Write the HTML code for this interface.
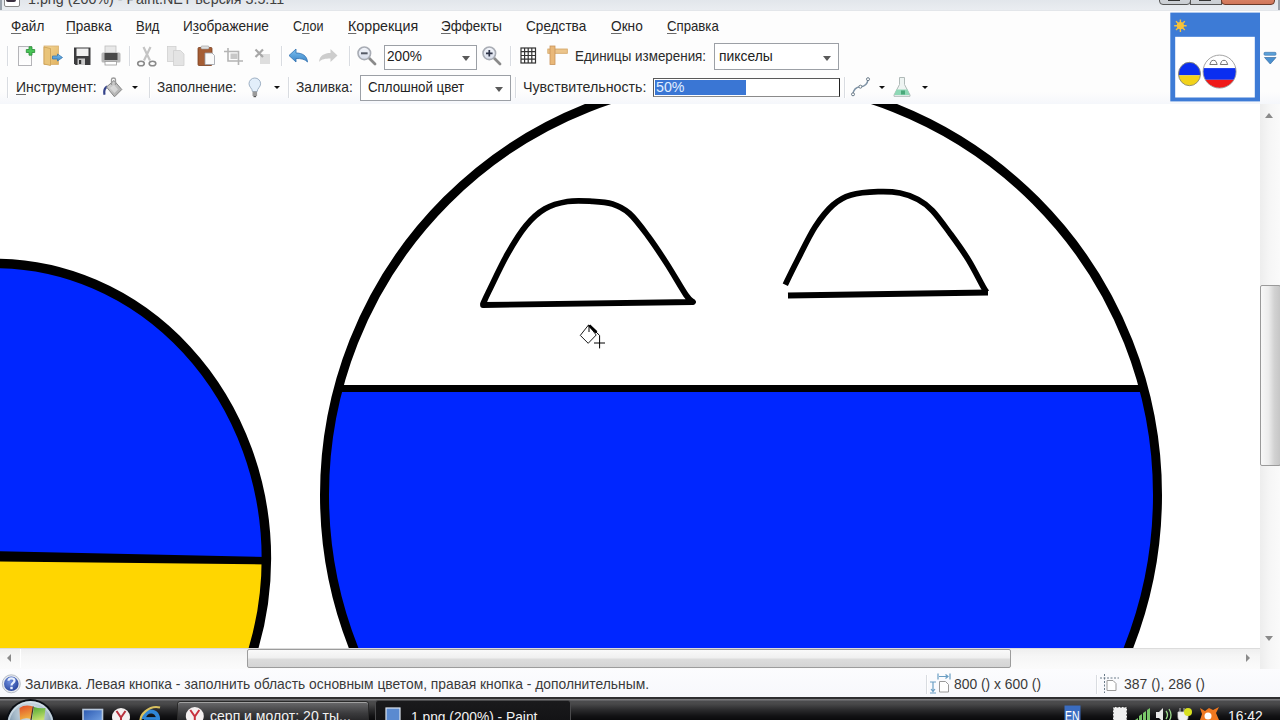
<!DOCTYPE html>
<html><head><meta charset="utf-8">
<style>
*{margin:0;padding:0;box-sizing:border-box}
html,body{width:1280px;height:720px;overflow:hidden;background:#fff;font-family:"Liberation Sans",sans-serif;position:relative}
.a{position:absolute}
.t{position:absolute;white-space:nowrap;line-height:20px}
.u{text-decoration:underline;text-decoration-thickness:1px;text-underline-offset:2px;text-decoration-color:#6a6a6a}
.sep{position:absolute;width:2px;border-left:1px solid #d9dce1;border-right:1px solid #fff}
.combo{position:absolute;background:#fff;border:1px solid #9ca0a6}
.arr{position:absolute;width:0;height:0;border-left:4.5px solid transparent;border-right:4.5px solid transparent;border-top:5px solid #555}
svg{position:absolute;overflow:visible}
</style></head><body>
<div class="a" style="left:0;top:0;width:1280px;height:9.5px;background:linear-gradient(#e2e6eb,#eaedf1)"></div><div class="a" style="left:0;top:0;width:2px;height:11px;background:#9aa3ad"></div><div class="a" style="left:3.5px;top:-4px;width:16px;height:11px;border:1.5px solid #8a8a8a;border-radius:2px;background:#fff"></div><div class="a" style="left:5.5px;top:-2px;width:10px;height:4px;background:#3a3040;border-radius:2px"></div><div class="t" style="left:28.31px;top:-11px;font-size:14.5px;color:#404040;transform:scaleX(0.9856);transform-origin:0 0;">1.png (200%) - Paint.NET версия 3.5.11</div>
<div class="a" style="left:1159px;top:-12px;width:32px;height:17px;border:1px solid #555;border-radius:4px;background:linear-gradient(#dfe2e6,#c9cdd2)"></div><div class="a" style="left:1190px;top:-12px;width:32px;height:17px;border:1px solid #555;background:linear-gradient(#dfe2e6,#c9cdd2)"></div><div class="a" style="left:1221px;top:-12px;width:54px;height:17px;border:1px solid #6a3a2a;border-radius:4px;background:linear-gradient(#e89a7c,#d0765a)"></div><div class="a" style="left:1168px;top:0;width:12px;height:1px;background:#333"></div><div class="a" style="left:1199px;top:0;width:12px;height:1px;background:#333"></div><div class="a" style="left:1278px;top:0;width:2px;height:12px;background:#9aa0a8"></div><div class="a" style="left:0;top:10px;width:1280px;height:94px;background:linear-gradient(#fdfdfd 0,#fdfdfd 82px,#f5f7fb 94px)"></div><div class="a" style="left:0;top:10px;width:1280px;height:1px;background:#e3e6ea"></div><div class="t" style="left:10.50px;top:16px;font-size:14.5px;color:#262626;transform:scaleX(0.9350);transform-origin:0 0;"><span class=u>Ф</span>айл</div>
<div class="t" style="left:65.87px;top:16px;font-size:14.5px;color:#262626;transform:scaleX(0.9343);transform-origin:0 0;"><span class=u>П</span>равка</div>
<div class="t" style="left:136.11px;top:16px;font-size:14.5px;color:#262626;transform:scaleX(0.8925);transform-origin:0 0;"><span class=u>В</span>ид</div>
<div class="t" style="left:183.06px;top:16px;font-size:14.5px;color:#262626;transform:scaleX(0.9393);transform-origin:0 0;">И<span class=u>з</span>ображение</div>
<div class="t" style="left:293.30px;top:16px;font-size:14.5px;color:#262626;transform:scaleX(0.8675);transform-origin:0 0;">С<span class=u>л</span>ои</div>
<div class="t" style="left:347.52px;top:16px;font-size:14.5px;color:#262626;transform:scaleX(0.9834);transform-origin:0 0;"><span class=u>К</span>оррекция</div>
<div class="t" style="left:441.20px;top:16px;font-size:14.5px;color:#262626;transform:scaleX(0.9253);transform-origin:0 0;"><span class=u>Э</span>ффекты</div>
<div class="t" style="left:525.70px;top:16px;font-size:14.5px;color:#262626;transform:scaleX(0.9375);transform-origin:0 0;">Ср<span class=u>е</span>дства</div>
<div class="t" style="left:611.00px;top:16px;font-size:14.5px;color:#262626;transform:scaleX(0.9426);transform-origin:0 0;"><span class=u>О</span>кно</div>
<div class="t" style="left:667.40px;top:16px;font-size:14.5px;color:#262626;transform:scaleX(0.9098);transform-origin:0 0;"><span class=u>С</span>правка</div>
<div class="sep" style="left:7px;top:46px;height:20px"></div><div class="sep" style="left:129px;top:46px;height:20px"></div><div class="sep" style="left:281px;top:46px;height:20px"></div><div class="sep" style="left:349px;top:46px;height:20px"></div><div class="sep" style="left:510px;top:46px;height:20px"></div><div class="sep" style="left:7px;top:77px;height:21px"></div><div class="sep" style="left:149px;top:77px;height:21px"></div><div class="sep" style="left:288px;top:77px;height:21px"></div><div class="sep" style="left:515px;top:77px;height:21px"></div><div class="sep" style="left:844px;top:77px;height:21px"></div><svg style="left:0;top:0" width="1280" height="110" viewBox="0 0 1280 110">
<defs>
<linearGradient id="gPage" x1="0" y1="0" x2="0" y2="1"><stop offset="0" stop-color="#f4f4f6"/><stop offset="1" stop-color="#ffffff"/></linearGradient>
<linearGradient id="gFold" x1="0" y1="0" x2="1" y2="1"><stop offset="0" stop-color="#f3d89a"/><stop offset="1" stop-color="#e2b25e"/></linearGradient>
<linearGradient id="gBlue" x1="0" y1="0" x2="0" y2="1"><stop offset="0" stop-color="#7cc0f0"/><stop offset="1" stop-color="#3c86c8"/></linearGradient>
<linearGradient id="gLens" x1="0" y1="0" x2="0" y2="1"><stop offset="0" stop-color="#f4f6fb"/><stop offset="1" stop-color="#d6dcea"/></linearGradient>
</defs>
<!-- new -->
<rect x="18.5" y="46.5" width="13" height="19" fill="url(#gPage)" stroke="#b4b4b8"/>
<path d="M29,46.8 h3 v2.7 h2.7 v3 h-2.7 v2.7 h-3 v-2.7 h-2.7 v-3 h2.7 z" fill="#48c456" stroke="#2a8a36" stroke-width="0.8"/>
<!-- open -->
<rect x="44" y="46" width="14.5" height="18.5" fill="url(#gFold)" stroke="#d8b070" stroke-width="0.8"/>
<path d="M44,47 L50.5,48.5 L50.5,65.5 L44,64 Z" fill="#e9c47a" stroke="#caa055" stroke-width="0.8"/>
<path d="M52.5,56 h5 v-2 l5,3.5 l-5,3.5 v-2 h-5 z" fill="url(#gBlue)" stroke="#3a78b0" stroke-width="0.8"/>
<!-- save -->
<path d="M74,47.5 h16.5 v17.5 h-15 l-1.5,-1.5 z" fill="#3c3c3e"/>
<rect x="76.5" y="48.5" width="12" height="7.5" fill="#f0f0f0"/>
<rect x="77.5" y="58.5" width="7.5" height="6.5" fill="#c8c8c8"/>
<rect x="79" y="60" width="2.2" height="4" fill="#333"/>
<!-- print -->
<rect x="105" y="46" width="11" height="7" fill="#e8e8e8" stroke="#bdbdbd" stroke-width="0.8"/>
<rect x="101.5" y="52.5" width="19" height="10" rx="1.5" fill="#b8b8b8"/>
<rect x="104.5" y="53" width="13" height="7" fill="#4a4a4a"/>
<rect x="105" y="61.5" width="11.5" height="3.5" fill="#fff" stroke="#9a9a9a" stroke-width="0.8"/>
<!-- cut -->
<path d="M143.5,47 L150,60.5 M150.5,47 L144,60.5" stroke="#c4c4c4" stroke-width="2.2"/>
<ellipse cx="141" cy="63.5" rx="3.3" ry="2.3" fill="none" stroke="#8a8a8a" stroke-width="1.6"/>
<ellipse cx="152.5" cy="63.5" rx="3.3" ry="2.3" fill="none" stroke="#8a8a8a" stroke-width="1.6"/>
<!-- copy -->
<rect x="167.5" y="46.5" width="8.5" height="15" fill="#e6e6e6" stroke="#d0d0d0" stroke-width="0.8"/>
<path d="M173.5,50.5 h7 l3.5,3.5 v11.5 h-10.5 z" fill="#e4e4e4" stroke="#cfcfcf" stroke-width="0.8"/>
<!-- paste -->
<rect x="198" y="47.5" width="14" height="18" rx="1" fill="#a55d34" stroke="#7a3f1e" stroke-width="0.8"/>
<rect x="201" y="46" width="8" height="3" rx="1" fill="#e0e0e0" stroke="#999" stroke-width="0.6"/>
<path d="M205,53 h7 l2.5,2.5 v9 h-9.5 z" fill="#fafafa" stroke="#9aa0a8" stroke-width="0.8"/>
<!-- crop -->
<path d="M228,48 v13 h15 M224,51.5 h14.5 v13.5" fill="none" stroke="#b4b4b4" stroke-width="1.6"/>
<rect x="230.5" y="53.5" width="7" height="5.5" fill="#c8c8c8"/>
<!-- deselect -->
<rect x="260" y="54" width="10" height="10" fill="#dedede"/>
<path d="M255.5,49.5 L263,57 M263,49.5 L255.5,57" stroke="#a8a8a8" stroke-width="2.2"/>
<!-- undo -->
<path d="M289,55.5 L296,49 L296,53 C302,53 307,55.5 307.5,62 C305,59 301,58.5 296,58.5 L296,62 Z" fill="url(#gBlue)" stroke="#2f6fae" stroke-width="0.8"/>
<!-- redo -->
<path d="M337.5,55.5 L330.5,49 L330.5,53 C324.5,53 319.5,55.5 319,62 C321.5,59 325.5,58.5 330.5,58.5 L330.5,62 Z" fill="#cdcdcd"/>
<!-- zoom out -->
<line x1="368.5" y1="57.5" x2="375" y2="64" stroke="#8a8a8a" stroke-width="2.8" stroke-linecap="round"/>
<circle cx="364.3" cy="53.3" r="6.3" fill="url(#gLens)" stroke="#a8acb4" stroke-width="1.6"/>
<rect x="361" y="52.3" width="6.6" height="2" fill="#555a66"/>
<!-- zoom in -->
<line x1="493.5" y1="57.5" x2="500" y2="64" stroke="#8a8a8a" stroke-width="2.8" stroke-linecap="round"/>
<circle cx="489.3" cy="53.3" r="6.3" fill="url(#gLens)" stroke="#a8acb4" stroke-width="1.6"/>
<path d="M486,53.3 h6.6 M489.3,50 v6.6" stroke="#2e3448" stroke-width="1.7"/>
<!-- grid -->
<rect x="521" y="48" width="14.5" height="15" fill="#fff" stroke="#333" stroke-width="1.2"/>
<path d="M524.6,48 v15 M528.2,48 v15 M531.8,48 v15 M521,51.7 h14.5 M521,55.5 h14.5 M521,59.2 h14.5" stroke="#333" stroke-width="1.2"/>
<!-- ruler -->
<rect x="547.8" y="49" width="19.5" height="4.3" fill="#ecc58c" stroke="#d3a462" stroke-width="0.8"/>
<rect x="550" y="46" width="5" height="18.5" fill="#e9b879" stroke="#c8935a" stroke-width="0.8"/>
</svg>
<div class="combo" style="left:384px;top:44.5px;width:93px;height:25px"></div><div class="t" style="left:387.00px;top:46px;font-size:14.5px;color:#222;transform:scaleX(0.9410);transform-origin:0 0;">200%</div>
<div class="arr" style="left:461.5px;top:56px;border-top-color:#5a5a5a"></div><div class="t" style="left:575.08px;top:46px;font-size:14.5px;color:#2a2a2a;transform:scaleX(0.9231);transform-origin:0 0;">Единицы измерения:</div>
<div class="combo" style="left:714px;top:43px;width:125px;height:27px"></div><div class="t" style="left:718.94px;top:46px;font-size:14.5px;color:#222;transform:scaleX(0.9589);transform-origin:0 0;">пикселы</div>
<div class="arr" style="left:822.5px;top:55.5px;border-top-color:#5a5a5a"></div><div class="t" style="left:15.94px;top:77px;font-size:14.5px;color:#2a2a2a;transform:scaleX(0.9599);transform-origin:0 0;"><span class=u>И</span>нструмент:</div>
<div class="t" style="left:156.50px;top:77px;font-size:14.5px;color:#2a2a2a;transform:scaleX(0.9332);transform-origin:0 0;">Заполнение:</div>
<div class="t" style="left:296.20px;top:77px;font-size:14.5px;color:#2a2a2a;transform:scaleX(0.9488);transform-origin:0 0;">Заливка:</div>
<div class="combo" style="left:360px;top:74.5px;width:151px;height:26px"></div><div class="t" style="left:368.30px;top:77px;font-size:14.5px;color:#222;transform:scaleX(0.9167);transform-origin:0 0;">Сплошной цвет</div>
<div class="arr" style="left:495px;top:86.5px;border-top-color:#5a5a5a"></div><div class="t" style="left:522.52px;top:77px;font-size:14.5px;color:#2a2a2a;transform:scaleX(0.9819);transform-origin:0 0;">Чувствительность:</div>
<div class="a" style="left:653px;top:77.5px;width:187px;height:19px;background:#fff;border:1px solid #5a5a5a;border-bottom-color:#8a8a8a;border-right-color:#222"></div><div class="a" style="left:655px;top:79.5px;width:91px;height:15px;background:#3a76d4"></div><div class="t" style="left:656.00px;top:77px;font-size:14.5px;color:#e0eeff;transform:scaleX(0.9819);transform-origin:0 0;">50%</div>
<div class="arr" style="left:131.5px;top:86.3px;border-width:3.5px 3.2px 0 3.2px;border-top-color:#111"></div><div class="arr" style="left:274px;top:86.3px;border-width:3.5px 3.2px 0 3.2px;border-top-color:#111"></div><div class="arr" style="left:879px;top:86.3px;border-width:3.5px 3.2px 0 3.2px;border-top-color:#111"></div><div class="arr" style="left:921.5px;top:86.3px;border-width:3.5px 3.2px 0 3.2px;border-top-color:#111"></div><svg style="left:0;top:0" width="1280" height="110" viewBox="0 0 1280 110">
<defs>
<linearGradient id="gBk" x1="0" y1="0" x2="1" y2="1"><stop offset="0" stop-color="#d8d8d8"/><stop offset="1" stop-color="#a8a8a8"/></linearGradient>
</defs>
<!-- bucket -->
<path d="M107,85.5 C104,86.5 102.5,90 103.5,95 L105.5,94.5 C105,91 105.5,88.5 108,87.5 Z" fill="#34428a"/>
<path d="M106.5,87 L114,80.5 L121.8,89.5 L114.5,96.8 Z" fill="url(#gBk)" stroke="#858585" stroke-width="1"/><path d="M110,88 L114,85 L118,89.5 L114.5,93 Z" fill="#e8e8e8" opacity="0.6"/>
<path d="M111.5,85 V79.5 C111.5,77.5 115.5,77.5 115.5,79.5 V85" fill="none" stroke="#9a9a9a" stroke-width="1.3"/>
<!-- bulb -->
<path d="M252.4,91.5 C252.4,88.5 249,87 249,83.8 A5.8,5.8 0 1 1 260.6,83.8 C260.6,87 257.2,88.5 257.2,91.5 Z" fill="#e2eefa" stroke="#9eb0c4" stroke-width="1"/>
<rect x="252.5" y="91.5" width="4.6" height="4.5" fill="#9a9a9a"/>
<rect x="253.5" y="96" width="2.6" height="1.2" fill="#555"/>
<!-- curve -->
<path d="M853,94.3 C853.5,89 856.5,87 860.4,86.7 C864.5,86.3 867.5,85 868,79.2" fill="none" stroke="#7f93a6" stroke-width="1.5"/>
<circle cx="853" cy="94.3" r="1.5" fill="#fff" stroke="#6a7a88" stroke-width="1"/>
<circle cx="860.4" cy="86.7" r="1.5" fill="#fff" stroke="#6a7a88" stroke-width="1"/>
<circle cx="868" cy="79.2" r="1.5" fill="#fff" stroke="#6a7a88" stroke-width="1"/>
<!-- flask -->
<path d="M899.5,77.5 h5 v7 l5.5,10.5 v1.3 h-16 v-1.3 l5.5,-10.5 z" fill="#eef4f2" stroke="#b0bab8" stroke-width="1"/>
<path d="M896.5,89.5 h11 l2.3,5.5 h-15.6 z" fill="#8fd8b6"/>
<rect x="901" y="90.5" width="4" height="4" fill="#4aa87a"/>
</svg>
<div class="a" style="left:0;top:104px;width:1260px;height:544px;background:#fff;overflow:hidden">
<svg width="1260" height="544" viewBox="0 104 1260 544" style="left:0;top:0">
<defs>
<clipPath id="ruclip"><circle cx="741" cy="495" r="416.5"/></clipPath>
<clipPath id="uaclip"><ellipse cx="-5.6" cy="558.5" rx="272" ry="295"/></clipPath>
</defs>
<g clip-path="url(#uaclip)">
<rect x="-300" y="200" width="600" height="360" fill="#0026ff"/>
<rect x="-300" y="558" width="600" height="400" fill="#ffd600"/>
<path d="M-10,551 L270,557 L270,564.5 L-10,561.5 Z" fill="#000"/>
</g>
<ellipse cx="-5.6" cy="558.5" rx="272" ry="295" fill="none" stroke="#000" stroke-width="9.5"/>
<g clip-path="url(#ruclip)">
<rect x="300" y="388" width="900" height="600" fill="#0026ff"/>
<rect x="300" y="385" width="900" height="7" fill="#000"/>
</g>
<circle cx="741" cy="495" r="416.5" fill="none" stroke="#000" stroke-width="9"/>
<path d="M483.0,304.0 C484.0,301.8 484.9,299.3 489.0,291.0 C493.1,282.7 501.3,264.9 507.5,254.0 C513.7,243.1 519.8,233.1 526.0,225.6 C532.2,218.1 538.1,212.8 545.0,208.8 C551.9,204.8 559.7,202.8 567.5,201.5 C575.3,200.2 584.5,200.9 592.0,201.3 C599.5,201.7 606.2,202.0 612.5,204.0 C618.8,206.0 623.6,208.2 629.5,213.5 C635.4,218.8 641.8,227.6 648.0,236.0 C654.2,244.4 660.7,254.2 667.0,264.0 C673.3,273.8 681.7,288.7 686.0,295.0 C690.3,301.3 691.8,300.8 693.0,302.0 L483,305 Z" fill="none" stroke="#000" stroke-width="5.8" stroke-linejoin="round"/>
<path d="M785.3,284.7 C787.2,280.8 792.0,270.6 797.0,261.0 C802.0,251.4 809.0,236.3 815.0,227.0 C821.0,217.7 827.0,210.3 833.0,205.0 C839.0,199.7 843.5,197.2 851.0,195.0 C858.5,192.8 869.8,192.0 878.0,191.7 C886.2,191.4 893.3,191.7 900.0,193.0 C906.7,194.3 912.6,196.6 918.0,199.5 C923.4,202.4 927.1,204.9 932.5,210.7 C937.9,216.4 944.5,225.8 950.5,234.0 C956.5,242.2 963.1,251.2 968.5,260.0 C973.9,268.8 980.0,281.2 983.0,286.5 C986.0,291.8 986.0,291.1 986.6,292.0" fill="none" stroke="#000" stroke-width="5.8"/>
<path d="M788,295.5 L988,292.5" fill="none" stroke="#000" stroke-width="5.8"/>
<!-- cursor -->
<path d="M580.3,335.4 L588.5,325 L596.2,335 L588.2,343.3 Z" fill="#fff" stroke="#000" stroke-width="0.9"/>
<path d="M588.5,325 L599.6,335.4 V348.4 M594,343 H605 M589,325 V332" fill="none" stroke="#000" stroke-width="1"/>
<path d="M589.3,325.5 L596.5,332.3" stroke="#000" stroke-width="2.6"/>
</svg></div>
<div class="a" style="left:0;top:648px;width:1260px;height:21px;background:linear-gradient(#eeeeee,#f6f6f6 40%,#fbfbfb)"></div><div class="a" style="left:0;top:648px;width:1260px;height:1px;background:#dcdcdc"></div><div class="a" style="left:20px;top:649px;width:1px;height:19px;background:#fff"></div><div class="a" style="left:7px;top:653.5px;width:0;height:0;border-top:4.5px solid transparent;border-bottom:4.5px solid transparent;border-right:4.5px solid #8a8a8a"></div><div class="a" style="left:1245.5px;top:653.5px;width:0;height:0;border-top:4.5px solid transparent;border-bottom:4.5px solid transparent;border-left:4.5px solid #8a8a8a"></div><div class="a" style="left:246.5px;top:649px;width:764px;height:19px;border:1px solid #9c9c9c;border-radius:2px;background:linear-gradient(#fafafa,#f0f0f0 45%,#dcdcdc 55%,#d4d4d4)"></div><div class="a" style="left:1260px;top:104px;width:20px;height:565px;background:linear-gradient(90deg,#ededed,#f6f6f6 50%,#fafafa)"></div><div class="a" style="left:1265px;top:112.5px;width:0;height:0;border-left:4.7px solid transparent;border-right:4.7px solid transparent;border-bottom:5px solid #8a8a8a"></div><div class="a" style="left:1265px;top:635.5px;width:0;height:0;border-left:4.7px solid transparent;border-right:4.7px solid transparent;border-top:5px solid #8a8a8a"></div><div class="a" style="left:1260px;top:285px;width:21px;height:181px;border:1px solid #9a9a9a;border-radius:2px;background:linear-gradient(90deg,#f8f8f8,#ececec 40%,#d2d2d2 70%,#c6c6c6)"></div><div class="a" style="left:0;top:669px;width:1280px;height:28px;background:linear-gradient(#fcfcfe,#f7f8fc)"></div><svg style="left:0;top:660px" width="40" height="40" viewBox="0 660 40 40">
<defs><radialGradient id="gHelp" cx="0.4" cy="0.35" r="0.7"><stop offset="0" stop-color="#6f8fe0"/><stop offset="1" stop-color="#26429a"/></radialGradient></defs>
<circle cx="11.3" cy="683.8" r="9" fill="#e6e9ef" stroke="#b8bec8" stroke-width="1"/>
<circle cx="11.3" cy="683.8" r="7.3" fill="url(#gHelp)"/>
<path d="M8.5,680.8 C8.5,677.5 14.5,677.5 14.5,680.8 C14.5,683 11.5,683 11.5,685.5" fill="none" stroke="#e8f0ff" stroke-width="2.2"/>
<rect x="10.3" y="686.8" width="2.4" height="2.4" fill="#e8f0ff"/>
</svg><div class="t" style="left:25.00px;top:674px;font-size:14.5px;color:#3a3a3a;transform:scaleX(0.9546);transform-origin:0 0;">Заливка. Левая кнопка - заполнить область основным цветом, правая кнопка - дополнительным.</div>
<div class="sep" style="left:926px;top:675px;height:19px"></div><div class="sep" style="left:1096px;top:675px;height:19px"></div><svg style="left:0;top:0" width="1280" height="720" viewBox="0 0 1280 720">
<path d="M938,673.5 v6 M950,673.5 v6 M939,676.5 h9 M945.5,674.5 l2.5,2 l-2.5,2" fill="none" stroke="#6a9ec4" stroke-width="1.2"/>
<path d="M930,682 h6 M930,693 h6 M933,682.5 v9 M931,689 l2,2.5 l2,-2.5" fill="none" stroke="#6a9ec4" stroke-width="1.2"/>
<path d="M939.5,681.5 h6 l3,3 v7.5 h-9 z" fill="#fff" stroke="#9a9a9a" stroke-width="1"/>
<path d="M1104.5,674 v19 M1100,678 h19" fill="none" stroke="#6a7a88" stroke-width="1" stroke-dasharray="2,1.5"/>
<path d="M1107,680.5 h6 l3,3 v7 h-9 z" fill="#fff" stroke="#9a9a9a" stroke-width="1"/>
</svg><div class="t" style="left:953.75px;top:674px;font-size:14.5px;color:#3a3a3a;transform:scaleX(0.9558);transform-origin:0 0;">800 () x 600 ()</div>
<div class="t" style="left:1123.75px;top:674px;font-size:14.5px;color:#3a3a3a;transform:scaleX(0.9640);transform-origin:0 0;">387 (), 286 ()</div>
<div class="a" style="left:0;top:697px;width:1280px;height:23px;background:linear-gradient(#2e2e30 0,#2e2e30 2px,#7a7a7c 2px,#77777a 3px,#4c4c4e 4px,#484849 7px,#2a2a2c 13px,#121214 19px,#0a0a0c 23px)"></div><div class="a" style="left:176.5px;top:701px;width:192px;height:25px;border:1px solid #2a2a2a;border-radius:3px;box-shadow:inset 0 1px 0 #a0a0a0;background:linear-gradient(#6a6a6c,#3a3a3c 50%,#1a1a1c)"></div><div class="a" style="left:375px;top:700px;width:196px;height:25px;border:1px solid #4a4a4c;border-radius:3px;background:linear-gradient(#1a1a1c,#121214)"></div><svg style="left:0;top:690px" width="1280" height="30" viewBox="0 690 1280 30">
<defs>
<radialGradient id="gOrb" cx="0.5" cy="0.25" r="0.75"><stop offset="0" stop-color="#e6eef4"/><stop offset="0.45" stop-color="#a8bccb"/><stop offset="1" stop-color="#4a6a86"/></radialGradient>
</defs>
<circle cx="30.5" cy="724" r="25" fill="#0a0e14"/>
<circle cx="30.5" cy="724" r="23" fill="url(#gOrb)"/>
<circle cx="30.5" cy="724" r="22" fill="none" stroke="#e8f0f6" stroke-opacity="0.55" stroke-width="2"/>
<defs><linearGradient id="gRed" x1="0" y1="0" x2="0.3" y2="1"><stop offset="0" stop-color="#e04a28"/><stop offset="1" stop-color="#f0b040"/></linearGradient>
<linearGradient id="gGrn" x1="0" y1="0" x2="0.3" y2="1"><stop offset="0" stop-color="#4aa830"/><stop offset="1" stop-color="#c8e070"/></linearGradient></defs>
<path d="M19.5,708 Q25,704 33,706.5 L31,719 Q25,717 20,720 Z" fill="url(#gRed)"/>
<path d="M34,707 Q40,709 45.5,708 L44,721 Q38,722 32,719.5 Z" fill="url(#gGrn)"/>
<path d="M33.3,706.5 L31,720" stroke="#3a3020" stroke-width="1.2"/>
<defs><linearGradient id="gDesk" x1="0" y1="0" x2="1" y2="1"><stop offset="0" stop-color="#2a58b0"/><stop offset="1" stop-color="#7aa8e8"/></linearGradient></defs><rect x="83" y="709.5" width="19.5" height="14" fill="url(#gDesk)" stroke="#b8c8dc" stroke-width="1.6"/>
<circle cx="121" cy="717" r="9" fill="#f4f0f0"/>
<path d="M116.5,711 L121,717.5 L125.5,711 M121,717.5 V726" fill="none" stroke="#b8303c" stroke-width="2"/>
<path d="M144,719 A7,7 0 1 1 157,722" fill="none" stroke="#2f86d8" stroke-width="4"/>
<path d="M144,718.5 h13.5" stroke="#2f86d8" stroke-width="2.8"/>
<path d="M141,724 C138,714 150,705 160,707.5" fill="none" stroke="#d8c060" stroke-width="2.2"/>
<circle cx="194.8" cy="716" r="9" fill="#f4f0f0"/>
<path d="M190.3,710 L194.8,716.5 L199.3,710 M194.8,716.5 V726" fill="none" stroke="#c8303c" stroke-width="2"/>
<rect x="386" y="708" width="14" height="14" fill="#5a8ad0" stroke="#dde4ee" stroke-width="1.2"/>
<rect x="1064.5" y="705.5" width="16" height="16" fill="#3a6cc0"/>
<rect x="1113" y="707" width="14" height="14" fill="#f0f0f0" stroke="#222" stroke-width="1" stroke-dasharray="2,1.5"/>
<path d="M1135,720 l3,-2 v3 z M1139,721 v-5 l3,-2 v7 z M1143,721 v-8 l3,-2 v10 z M1147,721 v-11 l3,-2 v13 z" fill="#7ac86a"/>
<path d="M1156,712 h3 l4,-4 v14 l-4,-4 h-3 z" fill="#e8e8e8"/>
<path d="M1166,711 q3,4 0,8 M1169,709 q4,6 0,12" fill="none" stroke="#9ad88a" stroke-width="1.3"/>
<path d="M1180,708 v4 M1184,708 v4 M1178,712 h10 v5 q0,4 -5,4 q-5,0 -5,-4 z" fill="#f0f0f0" stroke="#ddd" stroke-width="0.8"/>
<circle cx="1188" cy="712" r="4" fill="#d8e020"/>
<path d="M1200,708 l5,3 l4,-3 l4,2 l6,-3 l-3,6 l3,7 h-19 l2,-6 z" fill="#f07820"/>
<circle cx="1208" cy="716" r="3.5" fill="#fff"/>
</svg><div class="t" style="left:210.00px;top:706px;font-size:14.5px;color:#f2f2f2;transform:scaleX(0.9678);transform-origin:0 0;">серп и молот: 20 ты...</div>
<div class="t" style="left:410.65px;top:707px;font-size:14.5px;color:#f2f2f2;transform:scaleX(0.9503);transform-origin:0 0;">1.png (200%) - Paint</div>
<div class="t" style="left:1065.28px;top:706px;font-size:14.5px;color:#fff;transform:scaleX(0.7230);transform-origin:0 0;">EN</div>
<div class="t" style="left:1228.45px;top:706px;font-size:14.5px;color:#f4f4f4;transform:scaleX(0.9540);transform-origin:0 0;">16:42</div>
<svg style="left:0;top:0" width="1280" height="110" viewBox="0 0 1280 110">
<rect x="1170.3" y="12.6" width="89.7" height="88.8" fill="#3d7bd6"/>
<rect x="1175.2" y="36.8" width="79.6" height="60.7" fill="#fff"/>
<g fill="none" stroke="#f2c040" stroke-width="1.4">
<path d="M1180.4,19.5 v12.5 M1174.2,25.7 h12.4 M1176,21.3 l8.8,8.8 M1184.8,21.3 l-8.8,8.8"/>
</g>
<circle cx="1180.4" cy="25.7" r="3.6" fill="#f6c23a"/>
<clipPath id="tua"><ellipse cx="1189.5" cy="74" rx="11" ry="11.7"/></clipPath>
<g clip-path="url(#tua)"><rect x="1175" y="60" width="30" height="15.3" fill="#0a2ef0"/><rect x="1175" y="75.3" width="30" height="12" fill="#f2d21a"/></g>
<ellipse cx="1189.5" cy="74" rx="11" ry="11.7" fill="none" stroke="#8a8a70" stroke-width="0.9"/>
<clipPath id="tru"><circle cx="1219.6" cy="71.6" r="16.5"/></clipPath>
<g clip-path="url(#tru)"><rect x="1200" y="54" width="40" height="14.1" fill="#fff"/><rect x="1200" y="68.1" width="40" height="11.7" fill="#0a2ef0"/><rect x="1200" y="79.8" width="40" height="12" fill="#f01818"/></g>
<circle cx="1219.6" cy="71.6" r="16.5" fill="none" stroke="#9a9a9a" stroke-width="0.9"/>
<path d="M1209.8,64.5 l1.2,-3 q0.8,-1.2 2.5,-1.2 q1.7,0 2.5,1.2 l1.2,3 z M1220.3,64.5 l1.2,-3 q0.8,-1.2 2.5,-1.2 q1.7,0 2.5,1.2 l1.2,3 z" fill="none" stroke="#666" stroke-width="0.9"/>
<rect x="1264" y="52.3" width="12" height="3" rx="1" fill="#5aa0d8" stroke="#3a70a8" stroke-width="0.6"/>
<path d="M1264.5,57.5 h11.5 l-5.75,6.5 z" fill="#4a90d0" stroke="#2a6098" stroke-width="0.6"/>
</svg></body></html>
